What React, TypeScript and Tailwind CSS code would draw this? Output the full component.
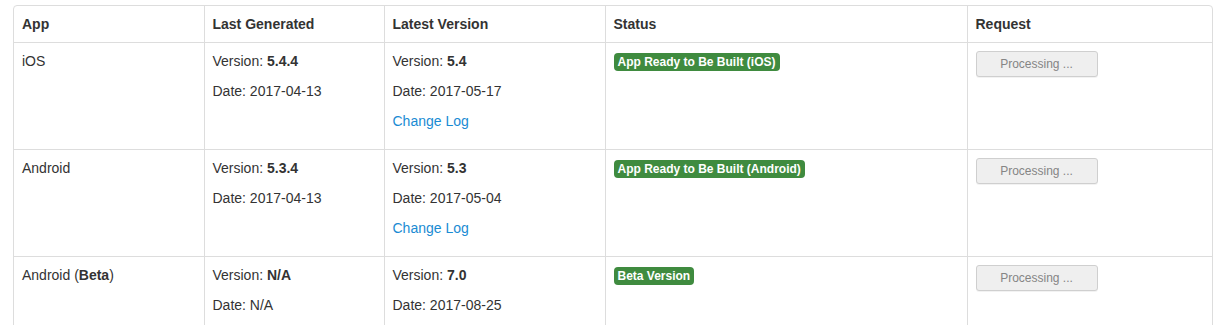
import React from 'react';

type Row = {
    app: React.ReactNode;
    genVersion: string;
    genDate: string;
    latestVersion: string;
    latestDate: string;
    changeLog: boolean;
    status: string;
};

const rows: Row[] = [
    { app: 'iOS', genVersion: '5.4.4', genDate: '2017-04-13', latestVersion: '5.4', latestDate: '2017-05-17', changeLog: true, status: 'App Ready to Be Built (iOS)' },
    { app: 'Android', genVersion: '5.3.4', genDate: '2017-04-13', latestVersion: '5.3', latestDate: '2017-05-04', changeLog: true, status: 'App Ready to Be Built (Android)' },
    { app: <>Android (<b>Beta</b>)</>, genVersion: 'N/A', genDate: 'N/A', latestVersion: '7.0', latestDate: '2017-08-25', changeLog: true, status: 'Beta Version' },
];

const App = () => {
    return (
        <div className="pl-[13px] pt-[5px] bg-white min-h-[325px] text-[14px] leading-[20px] text-[#333]" style={{ fontFamily: '"Liberation Sans", Arial, sans-serif' }}>
            <div className="w-[1200px] border border-[#ddd] rounded-[4px] overflow-hidden">
                <table className="w-full table-fixed border-collapse">
                    <colgroup>
                        <col className="w-[190px]" />
                        <col className="w-[180px]" />
                        <col className="w-[221px]" />
                        <col className="w-[362px]" />
                        <col className="w-[245px]" />
                    </colgroup>
                    <thead>
                        <tr>
                            <th className="p-2 text-left font-bold">App</th>
                            <th className="p-2 text-left font-bold border-l border-[#ddd]">Last Generated</th>
                            <th className="p-2 text-left font-bold border-l border-[#ddd]">Latest Version</th>
                            <th className="p-2 text-left font-bold border-l border-[#ddd]">Status</th>
                            <th className="p-2 text-left font-bold border-l border-[#ddd]">Request</th>
                        </tr>
                    </thead>
                    <tbody>
                        {rows.map((row, i) => (
                            <tr key={i} className="border-t border-[#ddd] align-top">
                                <td className="p-2">{row.app}</td>
                                <td className="p-2 border-l border-[#ddd]">
                                    <p className="mb-[10px]">Version: <b>{row.genVersion}</b></p>
                                    <p className="mb-[10px]">Date: {row.genDate}</p>
                                </td>
                                <td className="p-2 border-l border-[#ddd]">
                                    <p className="mb-[10px]">Version: <b>{row.latestVersion}</b></p>
                                    <p className="mb-[10px]">Date: {row.latestDate}</p>
                                    {row.changeLog && (
                                        <p className="mb-[10px]"><a className="text-[#1a8bd3] cursor-pointer">Change Log</a></p>
                                    )}
                                </td>
                                <td className="p-2 border-l border-[#ddd]">
                                    <span className="inline-block bg-[#3f8b3f] text-white text-[12px] font-bold leading-[18px] px-[4px] rounded-[4px] align-middle">
                                        {row.status}
                                    </span>
                                </td>
                                <td className="p-2 border-l border-[#ddd]">
                                    <button
                                        disabled
                                        className="w-[122px] h-[26px] bg-[#efefef] border border-[#cfcfcf] rounded-[3px] text-[12px] text-[#858585] shadow-[0_1px_0_rgba(0,0,0,0.05)]"
                                    >
                                        Processing ...
                                    </button>
                                </td>
                            </tr>
                        ))}
                    </tbody>
                </table>
            </div>
        </div>
    );
};

export default App;
